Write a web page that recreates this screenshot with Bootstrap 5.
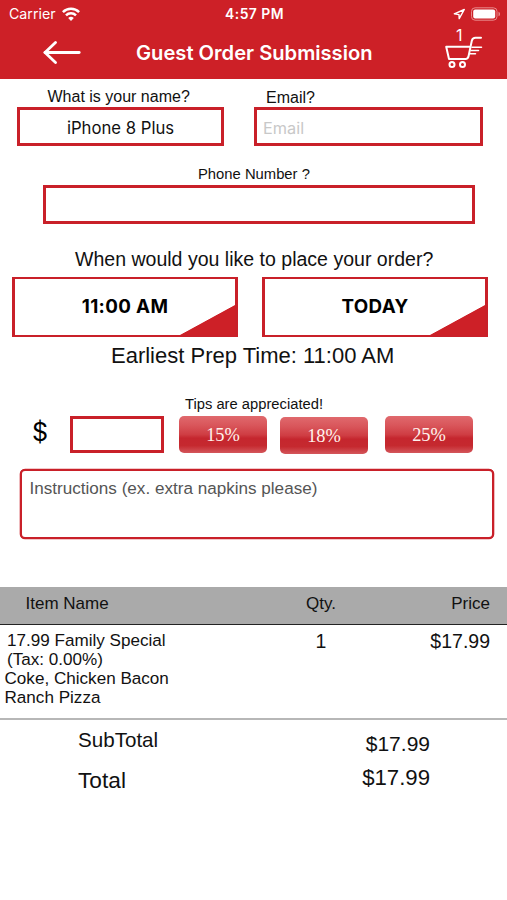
<!DOCTYPE html>
<html lang="en">
<head>
<meta charset="utf-8">
<meta name="viewport" content="width=device-width, initial-scale=1">
<title>Guest Order Submission</title>
<link href="https://cdn.jsdelivr.net/npm/bootstrap@5.3.0/dist/css/bootstrap.min.css" rel="stylesheet">
<style>
:root { --brand: #cd2027; --edge: #c92029; }
body { font-family: "Liberation Sans", Arial, sans-serif; color: #111; background: #fff; width: 507px; height: 900px; overflow: hidden; }
.ui { font-family: Inter, sans-serif; }
.app-header { background: var(--brand); height: 79px; }
.status-bar { height: 28px; font-size: 14.2px; line-height: 28px; padding: 0 7px 0 9px; }
.status-side { width: 90px; gap: 6px; }
.clock { font-weight: 600; font-size: 13.9px; letter-spacing: .45px; }
.title-bar { height: 49px; padding: 0 22px 0 43px; }
.page-title { font-size: 20.15px; font-weight: 600; line-height: 49px; margin: 0 0 0 55px; }
.cart-link { width: 40px; }
.cart-count { top: -13px; left: 11px; font-size: 16px; line-height: 24px; }
.form-control, .form-control:focus { border: 3px solid var(--edge); border-radius: 0; box-shadow: none; background: #fff; color: #111; height: 39px; padding: 3px 6px 0; font-size: 16.3px; }
.form-control.name-box { font-size: 16.7px; }
.form-control.email-box::placeholder { color: #c8c8c8; opacity: 1; }
.label-row { height: 28px; font-size: 16px; }
.name-col { width: 207px; margin-left: 17px; }
.email-col { width: 229px; margin-left: 30px; }
.name-label { line-height: 35px; padding-left: 30.5px; }
.email-label { line-height: 37px; padding-left: 12px; }
.phone-label { font-size: 14.8px; line-height: 20px; margin-top: 18px; padding-left: 198px; }
.phone-box.form-control { width: 432px; margin: 1px 0 0 43px; }
.when-label { font-size: 19.55px; line-height: 24px; margin-top: 23px; padding-left: 75px; }
.slots { margin-top: 6px; padding-left: 12px; gap: 24px; }
.slot { width: 226px; height: 60px; border: solid var(--edge); border-width: 2px 3px; border-radius: 0; color: #000; font-weight: 700; font-size: 18.8px; line-height: 56px; padding: 0; letter-spacing: .35px;
  background: linear-gradient(to bottom right, transparent calc(50% - .4px), var(--brand) calc(50% + .4px)) right bottom / 55px 30px no-repeat; }
.prep { font-size: 22px; line-height: 26px; margin-top: 6px; padding-left: 111px; }
.tips-label { font-size: 14.75px; line-height: 20px; margin-top: 25px; padding-left: 185px; }
.tips { margin-top: 2px; padding-left: 32px; height: 38px; }
.dollar { width: 38px; font-size: 25px; line-height: 32px; color: #000; }
.tip-box.form-control { width: 94px; height: 37px; }
.tip-btn { width: 88px; height: 37px; padding: 0; border: 0; border-radius: 5px; color: #fff3ee; font-family: "Liberation Serif", "Times New Roman", serif; font-size: 18.4px; line-height: 38px; margin-left: 15px;
  background: linear-gradient(#e0696d 0, #d9565b 25%, #cf3d43 50%, #c5262e 60%, #c5292f 80%, #d4565b 100%); }
.tip-btn.tip-mid { margin: 1px 4px 0 13px; }
.tip-btn.tip-last { margin-left: 13px; }
.notes-box.form-control { width: 474px; height: 70px; margin: 15px 0 0 20px; border-width: 2px; border-radius: 5px; font-size: 17.1px; line-height: 20px; padding: 8px 7.5px; resize: none; box-shadow: 0 0 0 .3px var(--edge); }
.notes-box.form-control::placeholder { color: #555; opacity: 1; }
.items-head { margin-top: 48px; height: 38px; background: #aaa; border-bottom: 1.5px solid #222; font-size: 17px; line-height: 33px; }
.col-item { width: 262px; }
.item-title { padding-left: 25.5px; }
.col-qty { width: 118px; }
.col-price { width: 110px; }
.items-row { height: 95px; border-bottom: 2px solid #b7b7b7; line-height: 19px; font-size: 17.1px; padding-top: 6px; }
.item-main { padding-left: 7px; }
.item-extra { padding-left: 4.5px; }
.amount { font-size: 19.5px; line-height: 21px; }
.totals { padding: 8px 77px 0 78px; }
.sub-name { font-size: 20.6px; line-height: 24px; }
.sub-value { font-size: 21px; line-height: 31px; }
.total-name { font-size: 22.7px; line-height: 41px; }
.total-value { font-size: 22.2px; line-height: 38px; }
</style>
</head>
<body>
<header class="app-header text-white">
  <div class="status-bar ui d-flex justify-content-between">
    <div class="status-side d-flex align-items-center">
      <span>Carrier</span>
      <svg width="18" height="14" viewBox="0 0 18 14" fill="none" stroke="#fff" stroke-width="2.5"><path d="M.9 5.1a11.5 11.5 0 0 1 16.2 0"/><path d="M4 8.4a7.1 7.1 0 0 1 10 0"/><path d="M9 14 6.2 11.1a4 4 0 0 1 5.6 0z" fill="#fff" stroke="none"/></svg>
    </div>
    <span class="clock">4:57 PM</span>
    <div class="status-side d-flex align-items-center justify-content-end">
      <svg width="12" height="12" viewBox="0 0 12 12" fill="none" stroke="#fff" stroke-width="1.4" stroke-linejoin="round"><path d="M11.300 1.500 1.300 5.800l4.700.8.2 4z"/></svg>
      <svg width="29" height="14" viewBox="1 0 29 14"><rect x="1.500" y=".8" width="25.500" height="12.400" rx="3.600" fill="none" stroke="#e88a8c"/><rect x="3.200" y="2.600" width="22" height="8.800" rx="2" fill="#fff"/><path d="M28.500 4.700c2 .7 2 3.900 0 4.600z" fill="#e88a8c"/></svg>
    </div>
  </div>
  <div class="title-bar ui d-flex align-items-center">
    <svg width="38" height="24" viewBox="0 0 38 24" fill="none" stroke="#fff" stroke-width="2.800" stroke-linecap="round" stroke-linejoin="round"><path d="M36.200 11.500H2"/><path d="M12.500 1.500 2 11.500l10.500 10"/></svg>
    <h1 class="page-title">Guest Order Submission</h1>
    <div class="cart-link position-relative ms-auto">
      <span class="cart-count position-absolute">1</span>
      <svg class="d-block" width="40" height="34" viewBox="0 0 40 34" fill="none" stroke="#fff" stroke-width="2" stroke-linecap="round" stroke-linejoin="round"><path d="M36 1.800h-5.500c-2 0-3.200 1-3.700 3L23.600 20c-.5 2.200-1.200 3-3 3H4L1.200 10.700h23"/><path d="M27 11.200h9.500M26 14.500h7.500M25 17.700h5.500" stroke-width="1.500"/><circle cx="7" cy="28.600" r="2.500"/><circle cx="17.500" cy="28.600" r="2.500"/></svg>
    </div>
  </div>
</header>

<main>
  <div class="d-flex">
    <div class="name-col">
      <label class="label-row name-label d-block" for="name">What is your name?</label>
      <input id="name" class="form-control name-box ui text-center" value="iPhone 8 Plus">
    </div>
    <div class="email-col">
      <label class="label-row email-label d-block" for="email">Email?</label>
      <input id="email" class="form-control email-box ui" placeholder="Email">
    </div>
  </div>
  <label class="phone-label d-block" for="phone">Phone Number ?</label>
  <input id="phone" class="form-control phone-box">

  <div class="when-label">When would you like to place your order?</div>
  <div class="slots d-flex">
    <button class="slot btn ui">11:00 AM</button>
    <button class="slot btn ui">TODAY</button>
  </div>
  <div class="prep">Earliest Prep Time: 11:00 AM</div>

  <div class="tips-label">Tips are appreciated!</div>
  <div class="tips d-flex align-items-start">
    <span class="dollar ui">$</span>
    <input class="form-control tip-box" aria-label="Tip">
    <button class="tip-btn btn">15%</button>
    <button class="tip-btn tip-mid btn">18%</button>
    <button class="tip-btn tip-last btn">25%</button>
  </div>
  <textarea class="form-control notes-box" placeholder="Instructions (ex. extra napkins please)"></textarea>

  <section>
    <div class="items-head d-flex">
      <div class="col-item item-title">Item Name</div>
      <div class="col-qty text-center">Qty.</div>
      <div class="col-price text-end">Price</div>
    </div>
    <div class="items-row d-flex">
      <div class="col-item">
        <div class="item-main">17.99 Family Special<br>(Tax: 0.00%)</div>
        <div class="item-extra">Coke, Chicken Bacon<br>Ranch Pizza</div>
      </div>
      <div class="col-qty amount text-center">1</div>
      <div class="col-price amount text-end">$17.99</div>
    </div>
    <div class="totals d-flex justify-content-between">
      <div><div class="sub-name">SubTotal</div><div class="total-name mt-2">Total</div></div>
      <div class="text-end"><div class="sub-value">$17.99</div><div class="total-value">$17.99</div></div>
    </div>
  </section>
</main>
<script src="https://cdn.jsdelivr.net/npm/bootstrap@5.3.0/dist/js/bootstrap.bundle.min.js"></script>
</body>
</html>
